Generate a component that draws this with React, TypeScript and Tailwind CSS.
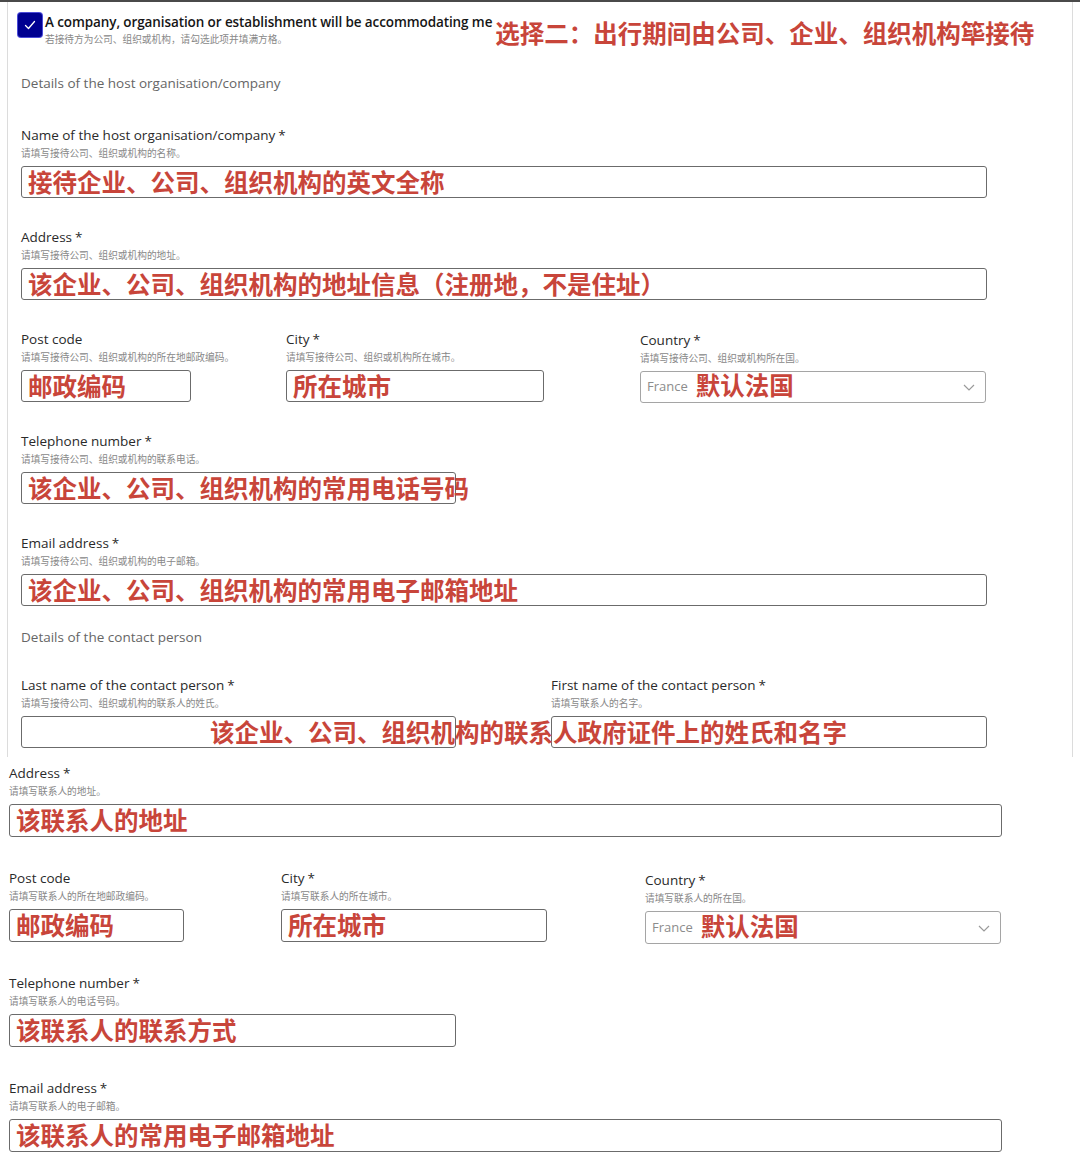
import type { ReactNode } from 'react'

const RED = 'text-[#c8453a]'
const CJK_RED = "font-['Noto_Sans_CJK_SC',sans-serif]"

function Label({ text, required }: { text: string; required?: boolean }) {
  return (
    <div className="h-[18px] whitespace-nowrap text-[13.5px] leading-[18px] text-[#2a2a2a]">
      {text}
      {required && <span className="ml-[3px]">*</span>}
    </div>
  )
}

function Hint({ text }: { text: string }) {
  return (
    <div className="mt-[3px] h-[12px] whitespace-nowrap font-['Noto_Sans_CJK_SC',sans-serif] text-[9.7px] leading-[12px] text-[#888]">
      {text}
    </div>
  )
}

function Box({ width, tall, children }: { width: number; tall?: boolean; children?: ReactNode }) {
  return (
    <div
      style={{ width }}
      className={`mt-[7px] flex items-center rounded-[3px] border border-[#6b6b6b] bg-white pl-[6px] ${tall ? 'h-[33px]' : 'h-[32px]'}`}
    >
      {children}
    </div>
  )
}

function RedText({ children }: { children: ReactNode }) {
  return (
    <span className={`${CJK_RED} ${RED} whitespace-nowrap text-[24.5px] leading-none font-bold`}>{children}</span>
  )
}

function Field({
  label,
  required,
  hint,
  width,
  tall,
  value,
}: {
  label: string
  required?: boolean
  hint: string
  width: number
  tall?: boolean
  value?: string
}) {
  return (
    <div>
      <Label text={label} required={required} />
      <Hint text={hint} />
      <Box width={width} tall={tall}>
        {value && <RedText>{value}</RedText>}
      </Box>
    </div>
  )
}

function CountrySelect({ width, tall }: { width: number; tall?: boolean }) {
  return (
    <div
      style={{ width }}
      className={`mt-[7px] flex items-center rounded-[3px] border border-[#a5a5a5] bg-white pl-[6px] pr-[10px] ${tall ? 'h-[33px]' : 'h-[32px]'}`}
    >
      <span className="text-[13px] text-[#8c8c8c]">France</span>
      <span className="ml-[8px]">
        <RedText>默认法国</RedText>
      </span>
      <svg className="ml-auto h-[10px] w-[12px]" viewBox="0 0 12 10" fill="none" stroke="#9a9a9a" strokeWidth={1.2}>
        <path d="M1 3l5 5 5-5" />
      </svg>
    </div>
  )
}

export default function App() {
  return (
    <div className="h-[1166px] w-[1080px] overflow-hidden bg-white font-['Open_Sans',sans-serif]">
      <div className="h-[2px] w-full bg-[#4a4a4a]" />

      {/* first screenshot: host organisation */}
      <div className="ml-[7px] h-[755px] w-[1066px] border-x border-[#dcdcdc]">
        <div className="flex h-[34px] items-start pl-[10px] pt-[11px]">
          <div className="flex h-[24px] w-[24px] shrink-0 items-center justify-center rounded-[3px] bg-[#000091] shadow-[0_0_0_1px_#4b4bd8]">
            <svg className="h-[14px] w-[14px]" viewBox="0 0 14 14" fill="none" stroke="white" strokeWidth={1.3}>
              <path d="M2.5 7.5l3 3 6-7" strokeLinecap="round" strokeLinejoin="round" />
            </svg>
          </div>
          <div className="ml-[3px]">
            <div className="h-[18px] whitespace-nowrap text-[13.5px] font-semibold leading-[18px] tracking-[-0.1px] text-[#161616]">
              A company, organisation or establishment will be accommodating me
            </div>
            <div className="mt-[2px] whitespace-nowrap font-['Noto_Sans_CJK_SC',sans-serif] text-[9.7px] leading-[12px] text-[#888]">
              若接待方为公司、组织或机构，请勾选此项并填满方格。
            </div>
          </div>
          <div className={`${CJK_RED} ${RED} ml-[3px] mt-[7px] whitespace-nowrap text-[24.5px] font-bold leading-[26px]`}>
            选择二：出行期间由公司、企业、组织机构筚接待
          </div>
        </div>

        <div className="pl-[13px]">
          <div className="mt-[38px] h-[18px] text-[13.5px] leading-[18px] text-[#666]">Details of the host organisation/company</div>

          <div className="mt-[34px]">
            <Field label="Name of the host organisation/company" required hint="请填写接待公司、组织或机构的名称。" width={966} value="接待企业、公司、组织机构的英文全称" />
          </div>
          <div className="mt-[30px]">
            <Field label="Address" required hint="请填写接待公司、组织或机构的地址。" width={966} value="该企业、公司、组织机构的地址信息（注册地，不是住址）" />
          </div>
          <div className="mt-[30px] flex">
            <div className="w-[265px]">
              <Field label="Post code" hint="请填写接待公司、组织或机构的所在地邮政编码。" width={170} value="邮政编码" />
            </div>
            <div className="w-[354px]">
              <Field label="City" required hint="请填写接待公司、组织或机构所在城市。" width={258} value="所在城市" />
            </div>
            <div className="-mb-[1px] mt-[1px]">
              <Label text="Country" required />
              <Hint text="请填写接待公司、组织或机构所在国。" />
              <CountrySelect width={346} />
            </div>
          </div>
          <div className="mt-[30px]">
            <Field label="Telephone number" required hint="请填写接待公司、组织或机构的联系电话。" width={435} value="该企业、公司、组织机构的常用电话号码" />
          </div>
          <div className="mt-[30px]">
            <Field label="Email address" required hint="请填写接待公司、组织或机构的电子邮箱。" width={966} value="该企业、公司、组织机构的常用电子邮箱地址" />
          </div>

          <div className="mt-[22px] h-[18px] text-[13.5px] leading-[18px] text-[#666]">Details of the contact person</div>

          <div className="relative mt-[30px] flex">
            <div className="w-[530px]">
              <Field label="Last name of the contact person" required hint="请填写接待公司、组织或机构的联系人的姓氏。" width={435} />
            </div>
            <div>
              <Field label="First name of the contact person" required hint="请填写联系人的名字。" width={436} />
            </div>
            <div className={`absolute left-[189px] top-[41px] ${CJK_RED} ${RED} whitespace-nowrap text-[24.5px] font-bold leading-[30px]`}>
              该企业、公司、组织机构的联系人政府证件上的姓氏和名字
            </div>
          </div>
        </div>
      </div>

      {/* second screenshot: contact person */}
      <div className="pl-[9px] pt-[7px]">
        <Field label="Address" required hint="请填写联系人的地址。" width={993} tall value="该联系人的地址" />
        <div className="mt-[32px] flex">
          <div className="w-[272px]">
            <Field label="Post code" hint="请填写联系人的所在地邮政编码。" width={175} tall value="邮政编码" />
          </div>
          <div className="w-[364px]">
            <Field label="City" required hint="请填写联系人的所在城市。" width={266} tall value="所在城市" />
          </div>
          <div className="-mb-[2px] mt-[2px]">
            <Label text="Country" required />
            <Hint text="请填写联系人的所在国。" />
            <CountrySelect width={356} tall />
          </div>
        </div>
        <div className="mt-[32px]">
          <Field label="Telephone number" required hint="请填写联系人的电话号码。" width={447} tall value="该联系人的联系方式" />
        </div>
        <div className="mt-[32px]">
          <Field label="Email address" required hint="请填写联系人的电子邮箱。" width={993} tall value="该联系人的常用电子邮箱地址" />
        </div>
      </div>
    </div>
  )
}
